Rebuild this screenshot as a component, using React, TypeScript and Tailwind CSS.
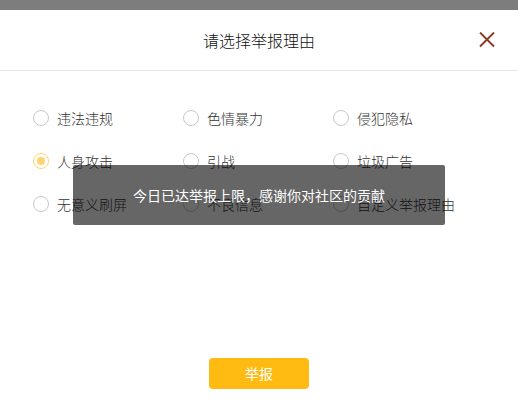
import { useState } from "react"

const REASONS = [
  "违法违规",
  "色情暴力",
  "侵犯隐私",
  "人身攻击",
  "引战",
  "垃圾广告",
  "无意义刷屏",
  "不良信息",
  "自定义举报理由",
]

function CloseIcon() {
  return (
    <svg className="size-4" viewBox="0 0 16 16" fill="none" stroke="#8b3a26" strokeWidth="1.9">
      <path d="M1 .5l14 14M15 .5l-14 14" />
    </svg>
  )
}

function Reason({ label, checked, onChange }: { label: string; checked: boolean; onChange: () => void }) {
  return (
    <label className="flex items-center gap-2 text-sm leading-4 whitespace-nowrap text-[#333333]">
      <input
        type="radio"
        name="reason"
        checked={checked}
        onChange={onChange}
        className="grid size-4 shrink-0 appearance-none place-items-center rounded-full border border-[#c8c8c8] bg-white checked:border-[#ffd470] checked:before:size-2 checked:before:rounded-full checked:before:bg-[#ffd470]"
      />
      {label}
    </label>
  )
}

function App() {
  const [selected, setSelected] = useState("人身攻击")

  return (
    <div className="min-h-screen bg-[#7d7d7d] pt-[10px] font-['Noto_Sans_CJK_SC',sans-serif] font-light">
      <div role="dialog" aria-labelledby="report-title" className="relative min-h-[calc(100vh-10px)] bg-white pb-[27px]">
        {/* Header */}
        <div className="grid grid-cols-[1fr_auto_1fr] items-center border-b border-[#e8e8e8] px-[23px] py-[18px]">
          <h1 id="report-title" className="col-start-2 text-base font-light text-[#111111]">
            请选择举报理由
          </h1>
          <button type="button" aria-label="关闭" className="justify-self-end">
            <CloseIcon />
          </button>
        </div>

        {/* Reasons */}
        <div className="grid grid-cols-3 gap-y-[27px] pt-[39px] pr-[35px] pl-[33px]">
          {REASONS.map((reason) => (
            <Reason
              key={reason}
              label={reason}
              checked={selected === reason}
              onChange={() => setSelected(reason)}
            />
          ))}
        </div>

        <div className="mt-[146px] flex justify-center">
          <button type="button" className="h-[31px] w-[100px] rounded bg-[#ffbb11] pb-[2px] text-sm font-normal text-white">
            举报
          </button>
        </div>

        {/* Toast */}
        <div
          role="status"
          className="absolute top-[155px] left-1/2 -translate-x-1/2 rounded-xs bg-black/60 px-[60px] py-5 text-sm leading-5 font-normal whitespace-nowrap text-white"
        >
          今日已达举报上限，感谢你对社区的贡献
        </div>
      </div>
    </div>
  )
}

export default App
